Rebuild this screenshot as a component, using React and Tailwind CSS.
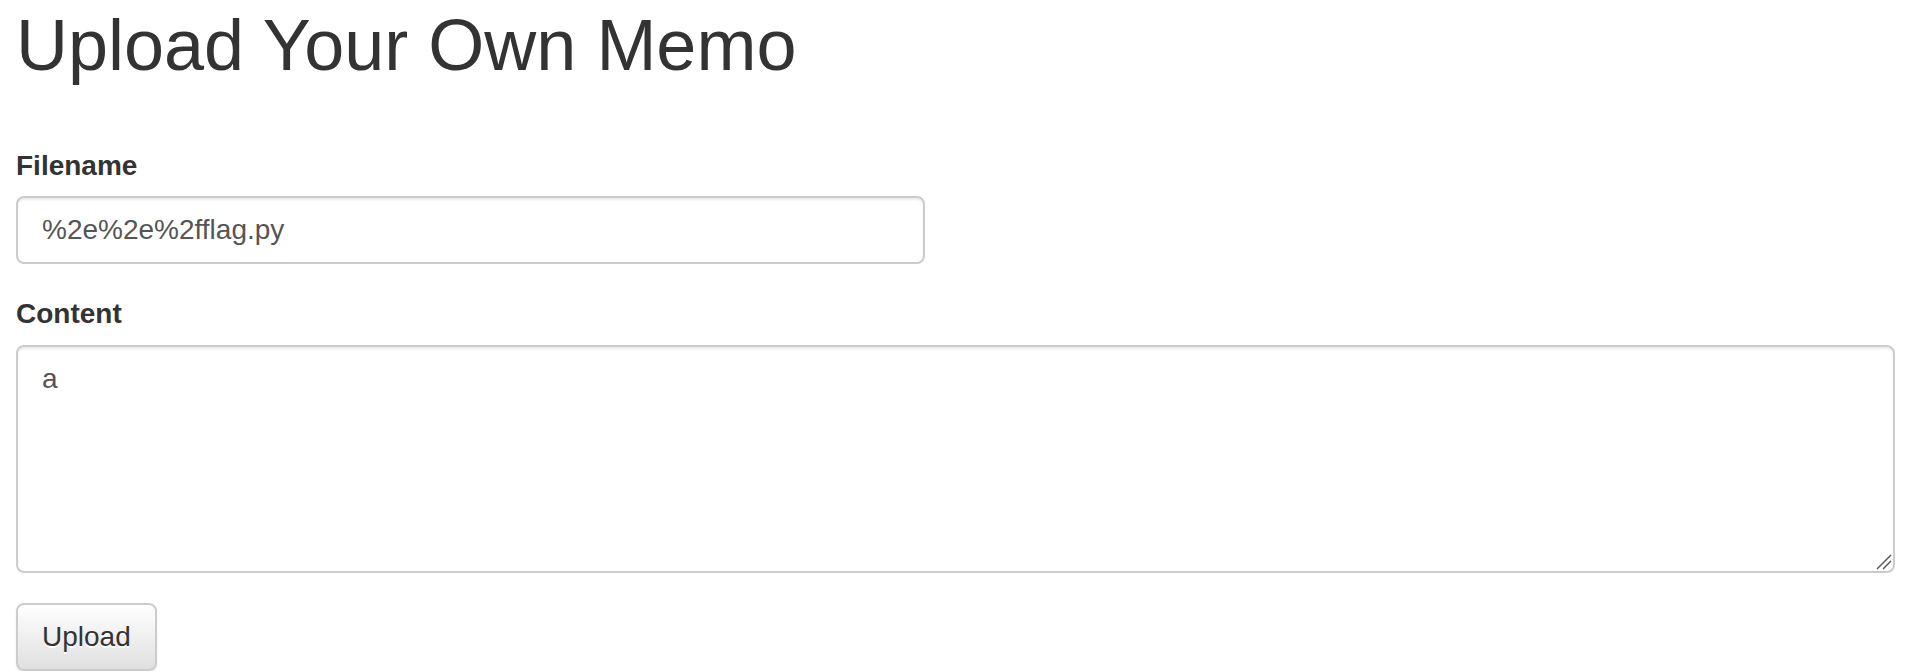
import React from "react";

export default function App() {
  const font = { fontFamily: '"Liberation Sans", Arial, Helvetica, sans-serif' };

  return (
    <div className="bg-white pl-[16px] pr-[11px] pt-[6px] text-[#333]" style={font}>
      <h1 className="text-[72px] font-normal leading-[1.1] mb-[61px]">Upload Your Own Memo</h1>

      <form onSubmit={(e) => e.preventDefault()}>
        <div className="mb-[30px]">
          <label className="block text-[28px] font-bold leading-[40px] mb-[10px]">Filename</label>
          <input
            type="text"
            defaultValue="%2e%2e%2fflag.py"
            className="block w-[909px] h-[68px] px-[24px] py-[12px] text-[28px] leading-[40px] text-[#555] bg-white border-2 border-[#ccc] rounded-[8px] shadow-[inset_0_2px_2px_rgba(0,0,0,0.075)] outline-none"
            style={font}
          />
        </div>

        <div className="mb-[30px]">
          <label className="block text-[28px] font-bold leading-[40px] mb-[11px]">Content</label>
          <div className="relative">
            <textarea
              defaultValue="a"
              className="block w-full h-[228px] px-[24px] py-[12px] text-[28px] leading-[40px] text-[#555] bg-white border-2 border-[#ccc] rounded-[8px] shadow-[inset_0_2px_2px_rgba(0,0,0,0.075)] outline-none resize-none"
              style={font}
            />
            {/* resize grip */}
            <svg
              className="absolute right-[3px] bottom-[3px] pointer-events-none"
              width="16"
              height="16"
              viewBox="0 0 16 16"
            >
              <line x1="1" y1="15" x2="15" y2="1" stroke="#555" strokeWidth="1.5" />
              <line x1="7" y1="15" x2="15" y2="7" stroke="#555" strokeWidth="1.5" />
            </svg>
          </div>
        </div>

        <button
          type="submit"
          className="h-[68px] px-[24px] py-[12px] text-[28px] leading-[40px] text-[#333] border-2 border-[#ccc] rounded-[8px] bg-gradient-to-b from-white to-[#e0e0e0] [text-shadow:0_2px_0_#fff] shadow-[0_2px_2px_rgba(0,0,0,0.075)]"
          style={font}
        >
          Upload
        </button>
      </form>
    </div>
  );
}
